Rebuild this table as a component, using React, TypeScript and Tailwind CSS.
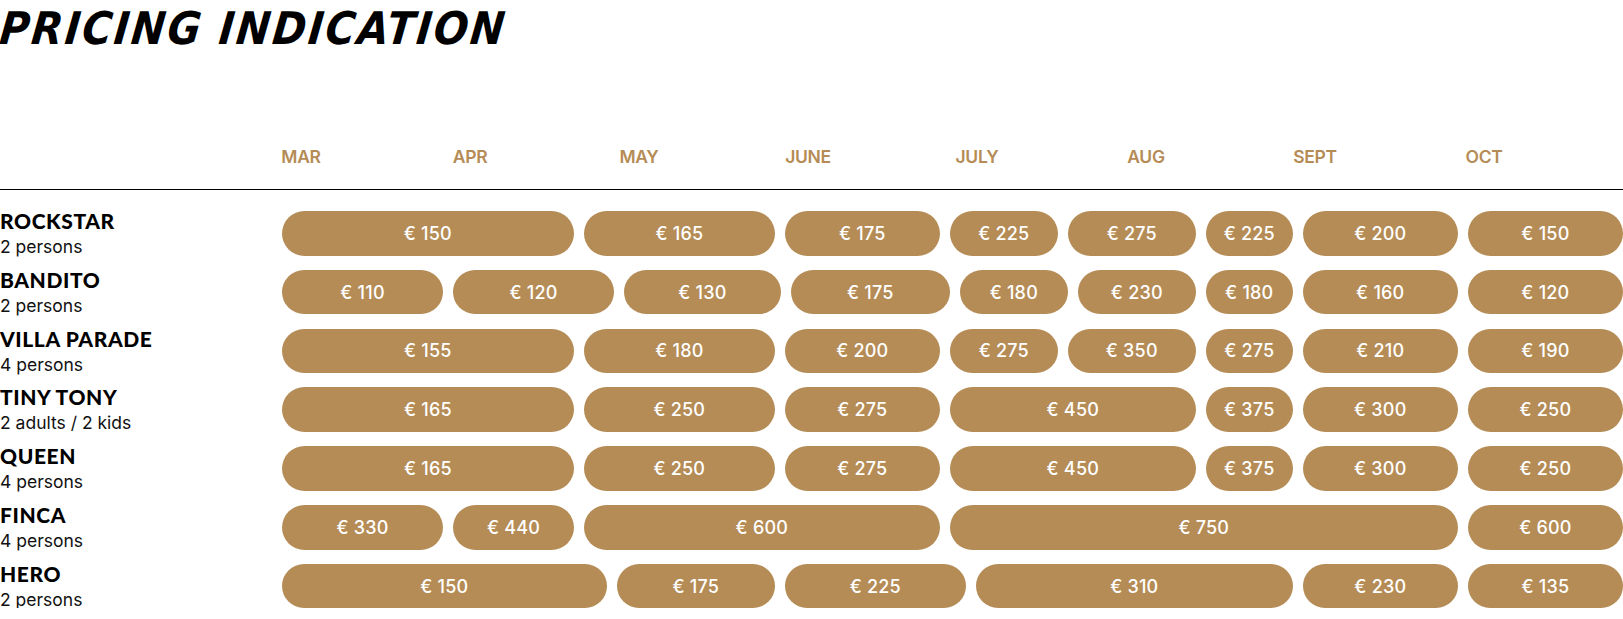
import React from "react";

type Pill = [string, string];
type Row = { name: string; sub: string; pills: Pill[] };

const rows: Row[] = [
  {
    name: "ROCKSTAR",
    sub: "2 persons",
    pills: [
      ["€ 150", "w-[291.7px]"],
      ["€ 165", "w-[190.7px]"],
      ["€ 175", "w-[154.7px]"],
      ["€ 225", "w-[107.7px]"],
      ["€ 275", "w-[127.7px]"],
      ["€ 225", "w-[86.7px]"],
      ["€ 200", "w-[154.7px]"],
      ["€ 150", "w-[155px]"],
    ],
  },
  {
    name: "BANDITO",
    sub: "2 persons",
    pills: [
      ["€ 110", "w-[161px]"],
      ["€ 120", "w-[160.4px]"],
      ["€ 130", "w-[156.7px]"],
      ["€ 175", "w-[158.7px]"],
      ["€ 180", "w-[107.7px]"],
      ["€ 230", "w-[117.7px]"],
      ["€ 180", "w-[86.7px]"],
      ["€ 160", "w-[154.7px]"],
      ["€ 120", "w-[155px]"],
    ],
  },
  {
    name: "VILLA PARADE",
    sub: "4 persons",
    pills: [
      ["€ 155", "w-[291.7px]"],
      ["€ 180", "w-[190.7px]"],
      ["€ 200", "w-[154.7px]"],
      ["€ 275", "w-[107.7px]"],
      ["€ 350", "w-[127.7px]"],
      ["€ 275", "w-[86.7px]"],
      ["€ 210", "w-[154.7px]"],
      ["€ 190", "w-[155px]"],
    ],
  },
  {
    name: "TINY TONY",
    sub: "2 adults / 2 kids",
    pills: [
      ["€ 165", "w-[291.7px]"],
      ["€ 250", "w-[190.7px]"],
      ["€ 275", "w-[154.7px]"],
      ["€ 450", "w-[245.7px]"],
      ["€ 375", "w-[86.7px]"],
      ["€ 300", "w-[154.7px]"],
      ["€ 250", "w-[155px]"],
    ],
  },
  {
    name: "QUEEN",
    sub: "4 persons",
    pills: [
      ["€ 165", "w-[291.7px]"],
      ["€ 250", "w-[190.7px]"],
      ["€ 275", "w-[154.7px]"],
      ["€ 450", "w-[245.7px]"],
      ["€ 375", "w-[86.7px]"],
      ["€ 300", "w-[154.7px]"],
      ["€ 250", "w-[155px]"],
    ],
  },
  {
    name: "FINCA",
    sub: "4 persons",
    pills: [
      ["€ 330", "w-[161px]"],
      ["€ 440", "w-[120.4px]"],
      ["€ 600", "w-[355.7px]"],
      ["€ 750", "w-[507.7px]"],
      ["€ 600", "w-[155px]"],
    ],
  },
  {
    name: "HERO",
    sub: "2 persons",
    pills: [
      ["€ 150", "w-[324.7px]"],
      ["€ 175", "w-[157.7px]"],
      ["€ 225", "w-[180.7px]"],
      ["€ 310", "w-[316.7px]"],
      ["€ 230", "w-[154.7px]"],
      ["€ 135", "w-[155px]"],
    ],
  },
];

const months = ["MAR", "APR", "MAY", "JUNE", "JULY", "AUG", "SEPT", "OCT"];

export default function App() {
  return (
    <div className="w-[1623px] bg-white font-['Inter',sans-serif] text-black">
      <div className="h-[60px] pt-[2px]">
        <h1 className="font-['DejaVu_Sans_Condensed','DejaVu_Sans',sans-serif] text-[45px] leading-[54px] font-bold italic tracking-[2.2px] -skew-x-6">
          PRICING INDICATION
        </h1>
      </div>
      <div className="h-[130px] border-b border-black">
        <div className="flex pl-[216.5px] pt-[87px]">
          {months.map((m) => (
            <div
              key={m}
              className="w-[169px] shrink-0 text-center text-[17.5px] leading-[20px] font-semibold tracking-[-0.3px] text-[#b58c56]"
            >
              {m}
            </div>
          ))}
        </div>
      </div>
      <div className="flex flex-col gap-[14.1px] pt-[21px]">
        {rows.map((r) => (
          <div key={r.name} className="flex h-[44.7px]">
            <div className="w-[282px] shrink-0">
              <div className="font-['Lato',sans-serif] text-[21px] leading-[20px] font-black tracking-[0.6px]">
                {r.name}
              </div>
              <div className="mt-[5px] text-[17.5px] leading-[22px] font-normal text-[#111]">
                {r.sub}
              </div>
            </div>
            <div className="flex gap-[10.3px]">
              {r.pills.map(([p, w], i) => (
                <div
                  key={i}
                  className={`${w} shrink-0 h-full rounded-full bg-[#b58c56] flex items-center justify-center text-white text-[18px] font-medium tracking-[0.2px]`}
                >
                  {p}
                </div>
              ))}
            </div>
          </div>
        ))}
      </div>
    </div>
  );
}
